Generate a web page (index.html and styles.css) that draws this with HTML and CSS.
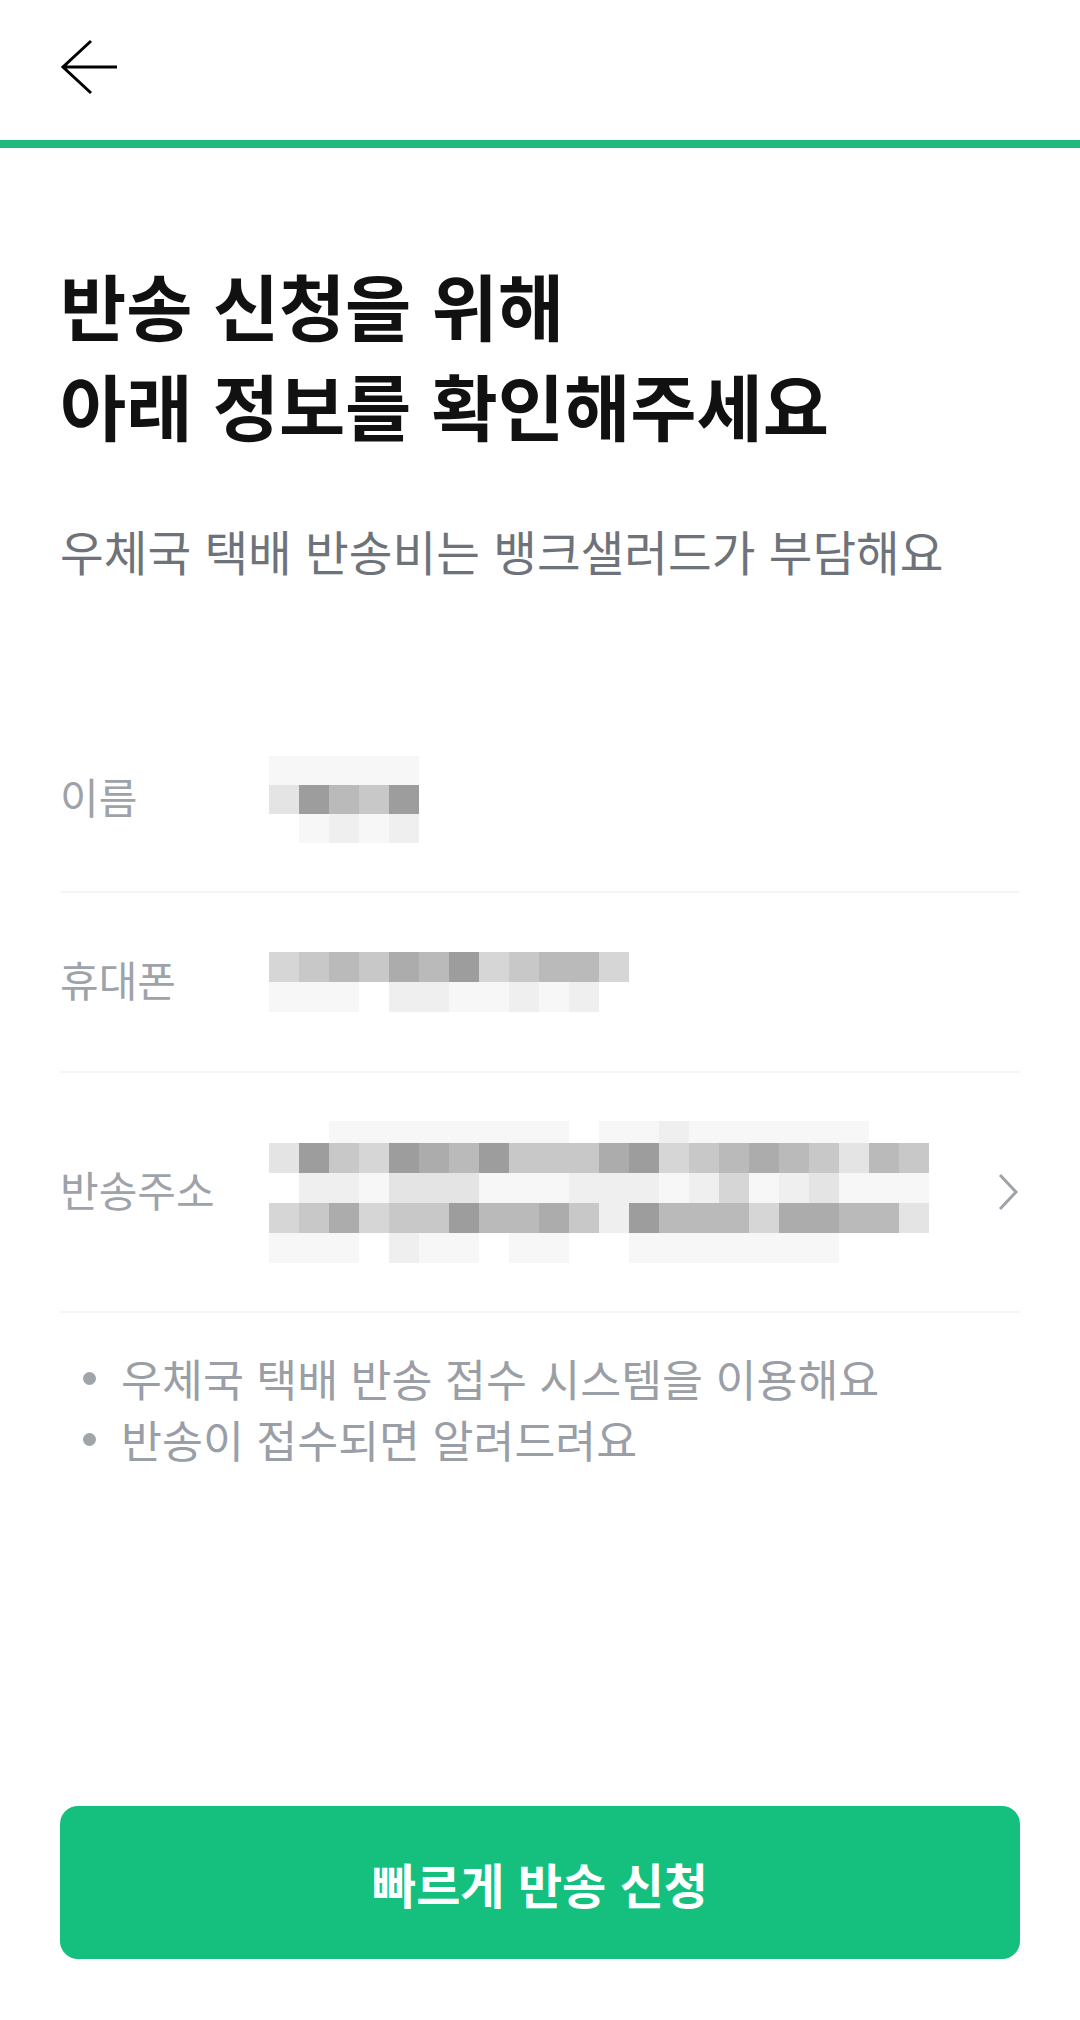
FILE: index.html
```html
<!DOCTYPE html>
<html lang="ko">

<head>
    <meta charset="UTF-8">
    <meta name="viewport" content="width=device-width, initial-scale=1.0">
    <title>반송 신청</title>
    <link rel="stylesheet" href="styles.css">
</head>

<body>
    <div class="page">
        <!-- 상단 바 -->
        <header class="top-bar">
            <button class="back-btn" aria-label="뒤로">
                <svg width="60" height="60" viewBox="0 0 60 60">
                    <path d="M31 4 L3 30 L31 56 M3 30 H57" fill="none" stroke="#000" stroke-width="3" />
                </svg>
            </button>
        </header>
        <div class="progress"></div>

        <main class="content">
            <h1 class="title">반송 신청을 위해<br>아래 정보를 확인해주세요</h1>
            <p class="subtitle">우체국 택배 반송비는 뱅크샐러드가 부담해요</p>

            <div class="info-list">
                <div class="info-row">
                    <span class="info-label">이름</span>
                    <div class="info-value">
                        <div class="blur blur-name">
                            <i class="b"></i><i class="b"></i><i class="b"></i><i class="b"></i><i class="b"></i>
                            <i class="d"></i><i class="i"></i><i class="g"></i><i class="f"></i><i class="i"></i>
                            <i class="a"></i><i class="b"></i><i class="c"></i><i class="b"></i><i class="c"></i>
                        </div>
                    </div>
                </div>

                <div class="info-row">
                    <span class="info-label">휴대폰</span>
                    <div class="info-value">
                        <div class="blur blur-phone">
                            <i class="e"></i><i class="f"></i><i class="g"></i><i class="f"></i><i class="h"></i><i class="g"></i>
                            <i class="i"></i><i class="e"></i><i class="f"></i><i class="g"></i><i class="g"></i><i class="e"></i>
                            <i class="b"></i><i class="b"></i><i class="b"></i><i class="a"></i><i class="c"></i><i class="c"></i>
                            <i class="b"></i><i class="b"></i><i class="c"></i><i class="b"></i><i class="c"></i><i class="a"></i>
                        </div>
                    </div>
                </div>

                <div class="info-row info-row-tall">
                    <span class="info-label">반송주소</span>
                    <div class="info-value">
                        <div class="blur blur-address">
                            <i class="a"></i><i class="a"></i><i class="b"></i><i class="b"></i><i class="b"></i><i class="b"></i><i class="b"></i><i class="b"></i><i class="b"></i><i class="b"></i><i class="a"></i>
                            <i class="b"></i><i class="b"></i><i class="c"></i><i class="b"></i><i class="b"></i><i class="b"></i><i class="b"></i><i class="b"></i><i class="b"></i><i class="a"></i><i class="a"></i>

                            <i class="d"></i><i class="i"></i><i class="f"></i><i class="e"></i><i class="i"></i><i class="h"></i><i class="g"></i><i class="i"></i><i class="f"></i><i class="f"></i><i class="f"></i>
                            <i class="h"></i><i class="i"></i><i class="e"></i><i class="f"></i><i class="g"></i><i class="h"></i><i class="g"></i><i class="f"></i><i class="d"></i><i class="g"></i><i class="f"></i>

                            <i class="a"></i><i class="c"></i><i class="c"></i><i class="b"></i><i class="d"></i><i class="d"></i><i class="d"></i><i class="b"></i><i class="b"></i><i class="b"></i><i class="c"></i>
                            <i class="c"></i><i class="c"></i><i class="b"></i><i class="c"></i><i class="e"></i><i class="b"></i><i class="c"></i><i class="d"></i><i class="b"></i><i class="b"></i><i class="b"></i>

                            <i class="e"></i><i class="f"></i><i class="h"></i><i class="e"></i><i class="f"></i><i class="f"></i><i class="i"></i><i class="g"></i><i class="g"></i><i class="h"></i><i class="f"></i>
                            <i class="c"></i><i class="i"></i><i class="g"></i><i class="g"></i><i class="g"></i><i class="e"></i><i class="h"></i><i class="h"></i><i class="g"></i><i class="g"></i><i class="d"></i>

                            <i class="b"></i><i class="b"></i><i class="b"></i><i class="a"></i><i class="c"></i><i class="b"></i><i class="b"></i><i class="a"></i><i class="b"></i><i class="b"></i><i class="a"></i>
                            <i class="a"></i><i class="b"></i><i class="b"></i><i class="b"></i><i class="b"></i><i class="b"></i><i class="b"></i><i class="b"></i><i class="a"></i><i class="a"></i><i class="a"></i>
                        </div>
                    </div>
                    <svg class="chevron" width="24" height="40" viewBox="0 0 24 40">
                        <path d="M4 3 L20 20 L4 37" fill="none" stroke="#9ea2a9" stroke-width="3" />
                    </svg>
                </div>
            </div>

            <ul class="notice">
                <li>우체국 택배 반송 접수 시스템을 이용해요</li>
                <li>반송이 접수되면 알려드려요</li>
            </ul>
        </main>

        <!-- 하단 버튼 -->
        <footer class="bottom">
            <button class="submit-btn">빠르게 반송 신청</button>
        </footer>
    </div>
</body>

</html>
```

FILE: styles.css
```css
body,
html {
    margin: 0;
    padding: 0;
    background-color: #ffffff;
    font-family: 'Noto Sans CJK KR', 'Noto Sans', sans-serif;
}

.page {
    min-height: 100vh;
    display: flex;
    flex-direction: column;
}

.top-bar {
    height: 140px;
    box-sizing: border-box;
    padding: 37px 60px 0;
}

.back-btn {
    display: block;
    padding: 0;
    border: none;
    background: none;
    cursor: pointer;
}

.back-btn svg {
    display: block;
}

.progress {
    height: 8px;
    background-color: #1db97f;
}

.content {
    padding: 0 60px;
}

.title {
    margin: 106px 0 0;
    font-size: 72px;
    line-height: 100px;
    font-weight: 700;
    color: #111111;
}

.subtitle {
    margin: 67px 0 0;
    font-size: 47.5px;
    line-height: 60px;
    color: #6e737b;
}

.info-list {
    margin-top: 127px;
}

.info-row {
    display: flex;
    align-items: center;
    min-height: 180px;
    box-sizing: border-box;
    padding: 48px 0;
    border-bottom: 2px solid #f4f5f7;
}

.info-label {
    width: 209px;
    flex-shrink: 0;
    padding-bottom: 6px;
    font-size: 42px;
    line-height: 1.2;
    color: #9ea2a9;
}

.info-value {
    flex: 1;
}

.chevron {
    display: block;
    flex-shrink: 0;
}

/* 가려진 개인정보 (모자이크) */
.blur {
    display: grid;
    grid-auto-columns: 30px;
}

.blur i {
    display: block;
}

.blur-name {
    grid-template-columns: repeat(5, 30px);
    grid-auto-rows: 29px;
}

.blur-phone {
    grid-template-columns: repeat(12, 30px);
    grid-auto-rows: 30px;
}

.blur-address {
    grid-template-columns: repeat(22, 30px);
    grid-template-rows: 22px repeat(4, 30px);
}

.blur .a { background-color: #ffffff; }
.blur .b { background-color: #f7f7f7; }
.blur .c { background-color: #efefef; }
.blur .d { background-color: #e4e4e4; }
.blur .e { background-color: #d6d6d6; }
.blur .f { background-color: #c8c8c8; }
.blur .g { background-color: #bababa; }
.blur .h { background-color: #acacac; }
.blur .i { background-color: #9d9d9d; }

.notice {
    margin: 34px 0 0;
    padding: 0;
    list-style: none;
}

.notice li {
    position: relative;
    padding-left: 61px;
    font-size: 44.5px;
    line-height: 61px;
    color: #9a9ea6;
}

.notice li::before {
    content: '';
    position: absolute;
    left: 23px;
    top: 25px;
    width: 13px;
    height: 13px;
    border-radius: 50%;
    background-color: #a0a4ab;
}

.bottom {
    margin-top: auto;
    padding: 0 60px 61px;
}

.submit-btn {
    display: block;
    width: 100%;
    height: 153px;
    padding: 0;
    border: none;
    border-radius: 18px;
    background-color: #15bf7e;
    color: #ffffff;
    font-family: 'Noto Sans CJK KR', 'Noto Sans', sans-serif;
    font-size: 48px;
    font-weight: 700;
    cursor: pointer;
}
```
